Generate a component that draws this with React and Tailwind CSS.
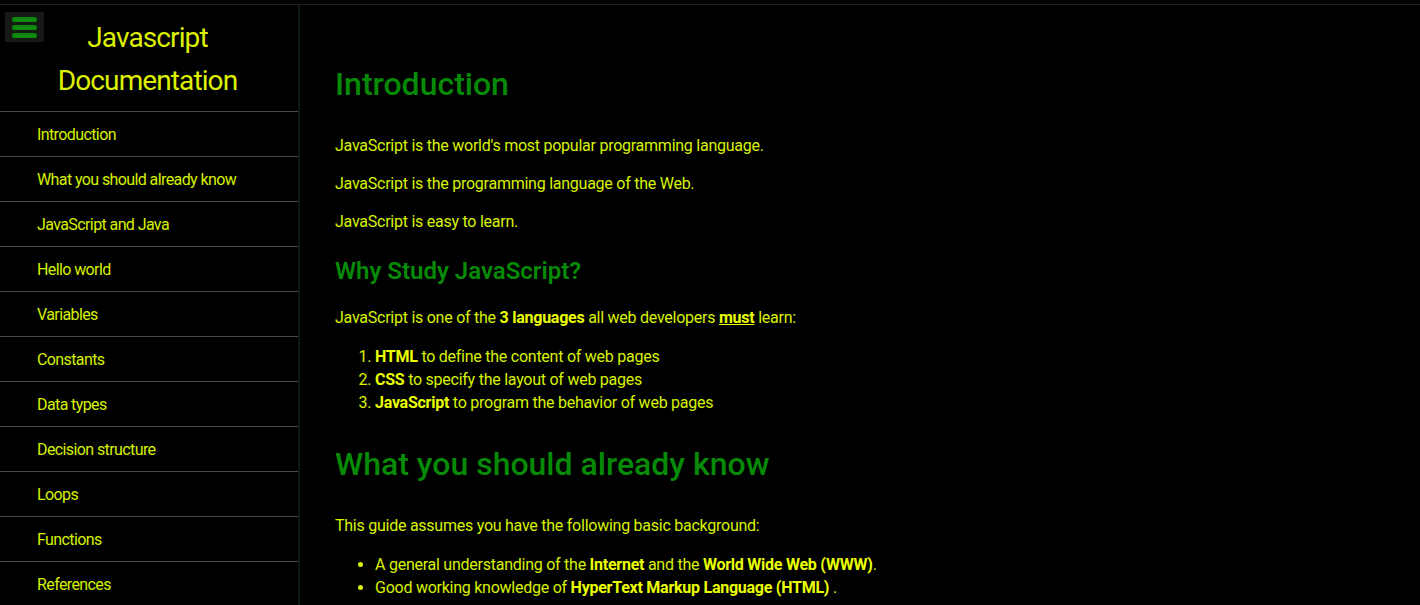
import React from 'react';

const navItems = [
  'Introduction',
  'What you should already know',
  'JavaScript and Java',
  'Hello world',
  'Variables',
  'Constants',
  'Data types',
  'Decision structure',
  'Loops',
  'Functions',
  'References',
];

const Menu = () => (
  <button className="absolute left-[5px] top-[7px] w-[39px] h-[30px] bg-[#151a15] flex flex-col items-center justify-center gap-[3px]">
    <span className="block w-[25px] h-[5px] rounded-full bg-[#0a8a0a]"></span>
    <span className="block w-[25px] h-[5px] rounded-full bg-[#0a8a0a]"></span>
    <span className="block w-[25px] h-[5px] rounded-full bg-[#0a8a0a]"></span>
  </button>
);

const Sidebar = () => (
  <nav className="relative w-[300px] shrink-0 border-r-2 border-[#0b1a10] h-[600px] overflow-hidden">
    <Menu />
    <header className="pt-[11px] pb-[9px] pr-[3px] text-center text-[28px] leading-[43px] tracking-[-0.9px] text-[#dcf000]">
      Javascript
      <br />
      Documentation
    </header>
    <ul>
      {navItems.map((item) => (
        <li
          key={item}
          className="h-[45px] border-t border-[#4a4a4a] pl-[37px] pt-[2px] flex items-center text-[16px] text-[#d6f000] tracking-[-0.6px]"
        >
          {item}
        </li>
      ))}
    </ul>
  </nav>
);

const B = ({ children }) => <b className="font-bold text-[#eaff00]">{children}</b>;

const Main = () => (
  <main className="flex-1 pl-[35px] pt-[60px] text-[16px] leading-[22px] tracking-[-0.25px] text-[#d8f200]">
    <h1 className="text-[32px] leading-[38px] font-medium tracking-normal text-[#078a07]">Introduction</h1>
    <p className="mt-[32px]">JavaScript is the world's most popular programming language.</p>
    <p className="mt-[16px]">JavaScript is the programming language of the Web.</p>
    <p className="mt-[16px]">JavaScript is easy to learn.</p>
    <h2 className="mt-[23px] text-[24px] leading-[30px] font-semibold tracking-normal text-[#078a07]">Why Study JavaScript?</h2>
    <p className="mt-[21px]">
      JavaScript is one of the <B>3 languages</B> all web developers <u className="font-bold text-[#eaff00]">must</u> learn:
    </p>
    <ol className="mt-[16px] list-decimal pl-10 leading-[23px]">
      <li><B>HTML</B> to define the content of web pages</li>
      <li><B>CSS</B> to specify the layout of web pages</li>
      <li><B>JavaScript</B> to program the behavior of web pages</li>
    </ol>
    <h1 className="mt-[31px] text-[32px] leading-[38px] font-medium tracking-normal text-[#078a07]">What you should already know</h1>
    <p className="mt-[32px]">This guide assumes you have the following basic background:</p>
    <ul className="mt-[16px] list-disc pl-10 leading-[23px]">
      <li>A general understanding of the <B>Internet</B> and the <B>World Wide Web (WWW)</B>.</li>
      <li>Good working knowledge of <B>HyperText Markup Language (HTML)</B> .</li>
    </ul>
  </main>
);

export default function App() {
  return (
    <div className="w-[1420px] h-[605px] overflow-hidden bg-black font-['Roboto',sans-serif]">
      <div className="h-1 bg-black"></div>
      <div className="border-t border-[#202026] flex">
        <Sidebar />
        <Main />
      </div>
    </div>
  );
}
